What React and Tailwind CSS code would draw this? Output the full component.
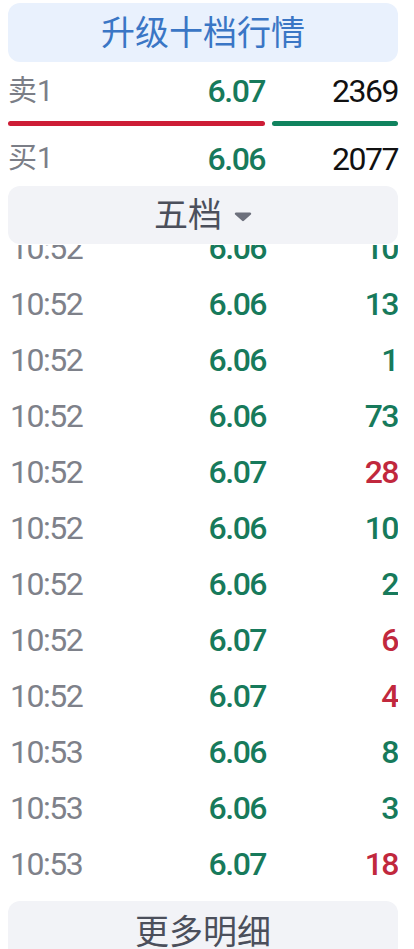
import React from 'react';

const trades = [
  { time: '10:52', price: '6.06', vol: '10', up: false },
  { time: '10:52', price: '6.06', vol: '13', up: false },
  { time: '10:52', price: '6.06', vol: '1', up: false },
  { time: '10:52', price: '6.06', vol: '73', up: false },
  { time: '10:52', price: '6.07', vol: '28', up: true },
  { time: '10:52', price: '6.06', vol: '10', up: false },
  { time: '10:52', price: '6.06', vol: '2', up: false },
  { time: '10:52', price: '6.07', vol: '6', up: true },
  { time: '10:52', price: '6.07', vol: '4', up: true },
  { time: '10:53', price: '6.06', vol: '8', up: false },
  { time: '10:53', price: '6.06', vol: '3', up: false },
  { time: '10:53', price: '6.07', vol: '18', up: true },
];

const font = { fontFamily: 'Roboto, "Noto Sans CJK SC", sans-serif' };

const QuoteRow = ({ label, price, volume, className }) => (
  <div className={`flex items-center ${className}`}>
    <div className="flex w-[257px] items-center justify-between">
      <span className="text-[29px] leading-none text-[#7b7e87]">{label}</span>
      <span className="text-[32px] leading-none font-medium tracking-[-1.5px] text-[#177a5b]">{price}</span>
    </div>
    <span className="flex-1 text-right text-[32px] leading-none tracking-[-1.5px] text-[#111111]">{volume}</span>
  </div>
);

const App = () => {
  return (
    <div className="w-[414px] h-[949px] overflow-hidden bg-white pl-2 pr-4" style={font}>
      <div className="mt-[3px] flex h-[59px] items-center justify-center rounded-xl bg-[#e9f1fd] text-[34px] leading-none text-[#3a76c5]">
        升级十档行情
      </div>

      <QuoteRow label="卖1" price="6.07" volume="2369" className="h-[58px]" />
      <div className="mt-px flex h-[5px] gap-[7px]">
        <div className="w-[257px] rounded-full bg-[#cd1d36]" />
        <div className="flex-1 rounded-full bg-[#10835e]" />
      </div>
      <QuoteRow label="买1" price="6.06" volume="2077" className="h-[60px] pt-[5px]" />

      <div className="flex h-[58px] items-center justify-center gap-3 rounded-xl bg-[#f2f3f7]">
        <span className="text-[34px] leading-none text-[#4b4f5b]">五档</span>
        <svg width="18" height="11" viewBox="0 0 18 11" className="mt-[3px]">
          <path d="M2 1.5 H16 a1.2 1.2 0 0 1 0.9 2 L9.9 9.8 a1.3 1.3 0 0 1 -1.8 0 L1.1 3.5 a1.2 1.2 0 0 1 0.9 -2 Z" fill="#6d707c" />
        </svg>
      </div>

      <div className="mt-px h-[651px] overflow-hidden">
        <div className="-mt-[25px]">
          {trades.map((t, i) => (
            <div key={i} className="flex h-[56px] items-center">
              <div className="flex w-[258px] items-center justify-between">
                <span className="pl-[2px] text-[32px] leading-none tracking-[-1.5px] text-[#7e818a]">{t.time}</span>
                <span className="text-[32px] leading-none font-medium tracking-[-1.5px] text-[#177a5b]">{t.price}</span>
              </div>
              <span
                className={`flex-1 text-right text-[32px] leading-none font-medium tracking-[-1.5px] ${
                  t.up ? 'text-[#c1283d]' : 'text-[#177a5b]'
                }`}
              >
                {t.vol}
              </span>
            </div>
          ))}
        </div>
      </div>

      <div className="mt-[5px] flex h-[60px] items-center justify-center rounded-xl bg-[#f2f3f7] pt-[1px] text-[34px] leading-none text-[#4b4f5b]">
        更多明细
      </div>
    </div>
  );
};

export default App;
